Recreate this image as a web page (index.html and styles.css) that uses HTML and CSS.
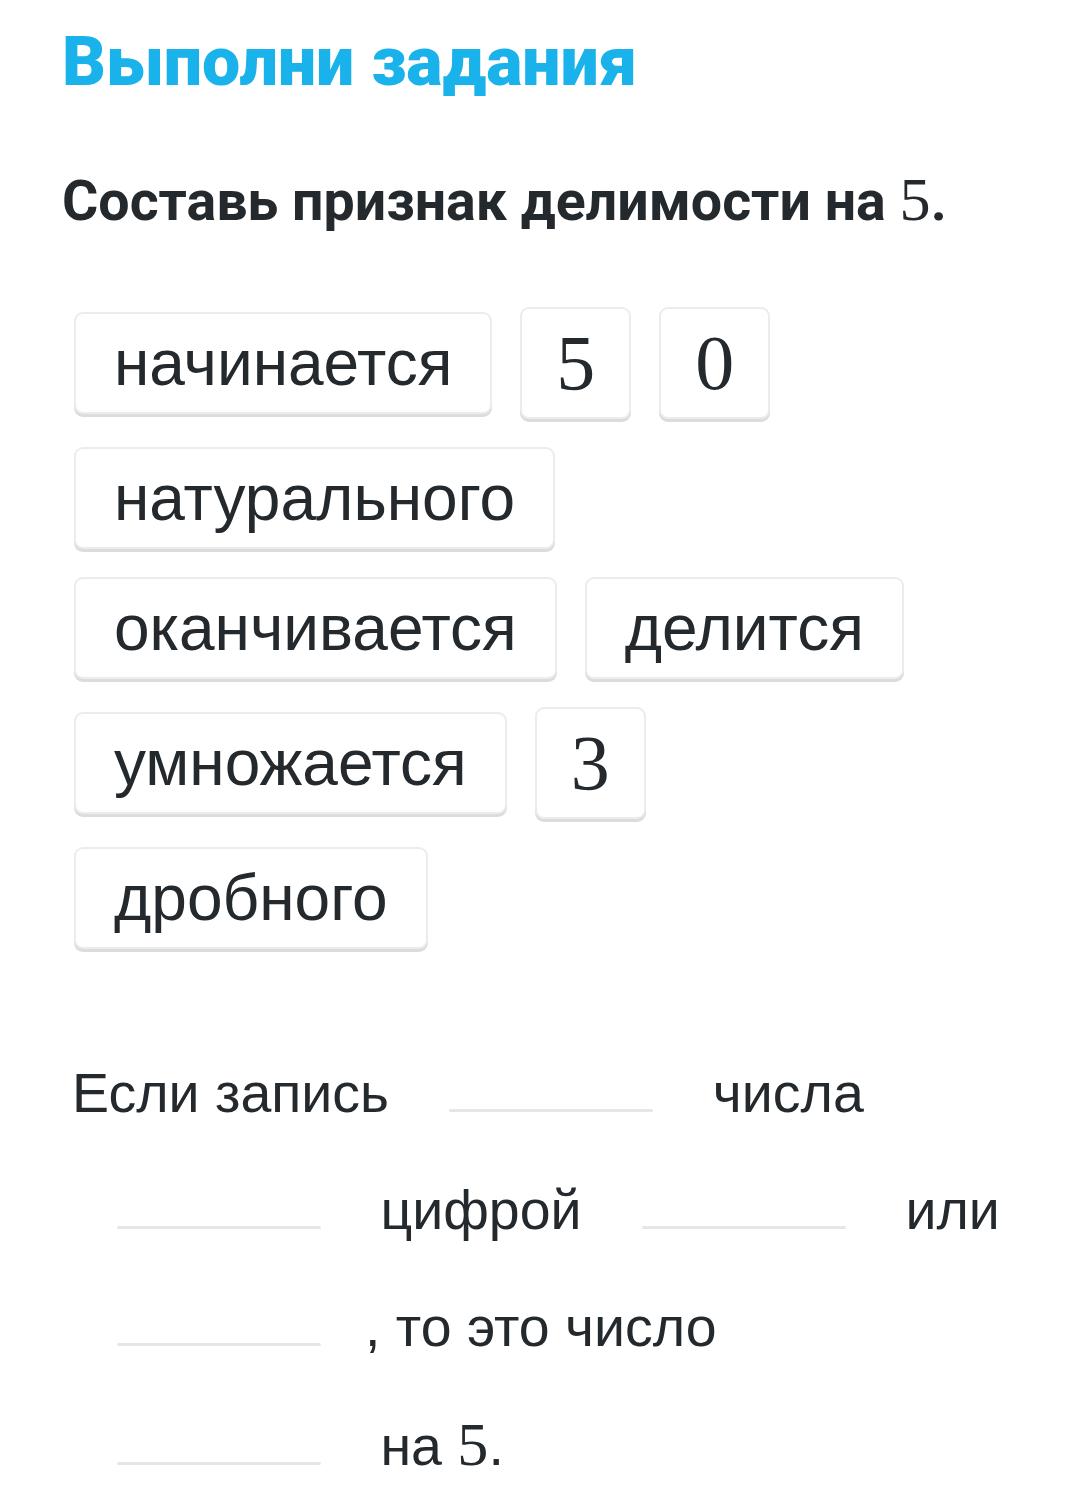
FILE: index.html
```html
<!DOCTYPE html>
<html lang="ru">
<head>
    <meta charset="UTF-8">
    <meta name="viewport" content="width=device-width, initial-scale=1.0">
    <title>Выполни задания</title>
    <link rel="stylesheet" href="styles.css">
</head>
<body>
    <div class="task">
        <h1 class="title">Выполни задания</h1>
        <h2 class="question">Составь признак делимости на <span class="num">5</span>.</h2>

        <div class="options">
            <div class="chip">начинается</div>
            <div class="chip digit">5</div>
            <div class="chip digit">0</div>
            <div class="chip">натурального</div>
            <div class="chip">оканчивается</div>
            <div class="chip">делится</div>
            <div class="chip">умножается</div>
            <div class="chip digit">3</div>
            <div class="chip">дробного</div>
        </div>

        <p class="sentence">Если запись <span class="blank"></span> числа <span class="blank"></span> цифрой <span class="blank"></span> или <span class="blank"></span>, то это число <span class="blank"></span> на <span class="num">5</span>.</p>
    </div>
</body>
</html>
```

FILE: styles.css
```css
body {
    margin: 0;
    background: #fff;
    color: #24292e;
    font-family: "Liberation Sans", Arial, sans-serif;
}
.task {
    padding: 22px 0 0 62px;
}
.title {
    margin: 0;
    font-family: Roboto, "Liberation Sans", sans-serif;
    font-weight: 900;
    font-size: 68px;
    line-height: 80px;
    color: #1ab2ea;
}
.question {
    margin: 62px 0 0 0;
    font-family: Roboto, "Liberation Sans", sans-serif;
    font-weight: 700;
    font-size: 55.5px;
    line-height: 70px;
    color: #24292e;
}
.num {
    font-family: "Liberation Serif", "DejaVu Serif", serif;
    font-weight: normal;
    font-size: 1.12em;
}

.options {
    display: flex;
    flex-wrap: wrap;
    align-items: center;
    gap: 28px;
    width: 932px;
    margin: 70px 0 0 12px;
}
.chip {
    box-sizing: border-box;
    height: 102px;
    padding: 0 38px;
    display: flex;
    align-items: center;
    border: 2px solid #ececec;
    border-radius: 9px;
    box-shadow: 0 3px 0 #dcdcdc;
    background: #fff;
    font-size: 64px;
}
.chip.digit {
    width: 111px;
    height: 112px;
    padding: 0;
    justify-content: center;
    font-family: "Liberation Serif", "DejaVu Serif", serif;
    font-size: 78px;
}

.sentence {
    margin: 86px 0 0 10px;
    width: 950px;
    font-size: 55.5px;
    line-height: 117px;
}
.blank {
    display: inline-block;
    width: 204px;
    height: 0;
    margin: 0 44.5px;
    border-bottom: 3px solid #e6e6e6;
    border-radius: 2px;
    vertical-align: baseline;
}
```
